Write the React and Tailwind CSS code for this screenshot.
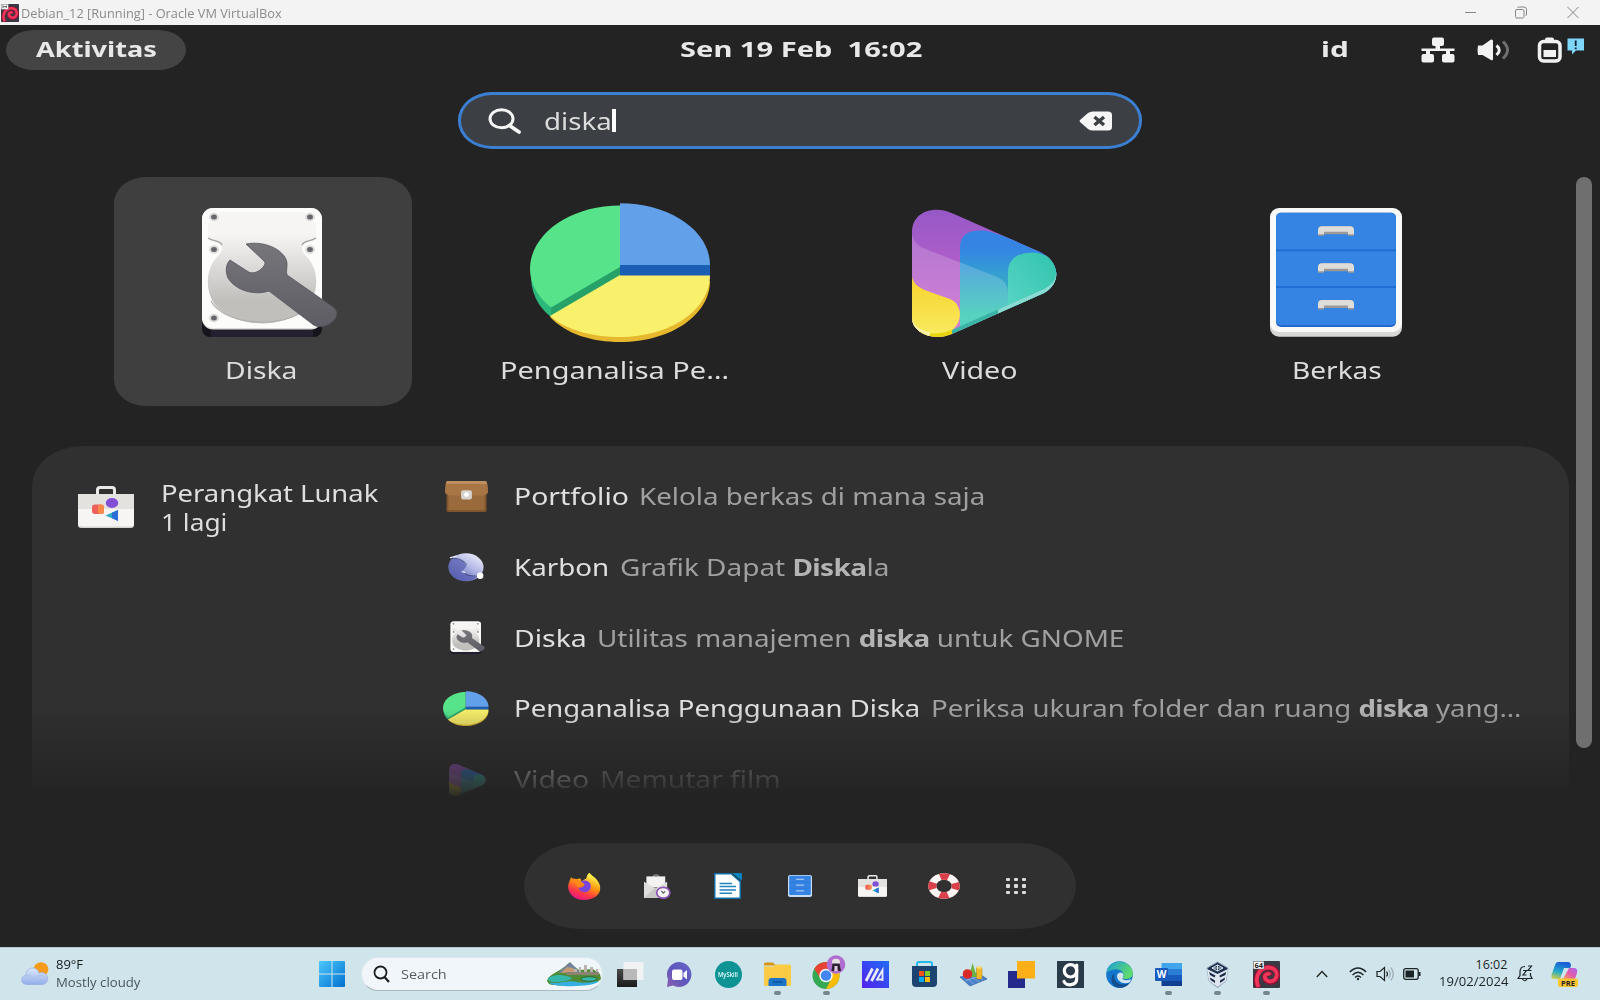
import React, { useLayoutEffect, useRef, useState } from "react";

/* Text stretched horizontally to a given width, like the scaled guest display. */
function Fit({ w, className = "", children }) {
  const ref = useRef(null);
  const [scale, setScale] = useState(1);
  useLayoutEffect(() => {
    setScale(w / ref.current.offsetWidth);
  }, [w]);
  return (
    <span className={"block shrink-0 " + className} style={{ width: w }}>
      <span ref={ref} className="inline-block origin-left whitespace-pre" style={{ transform: `scaleX(${scale})` }}>
        {children}
      </span>
    </span>
  );
}

const VIEW = { viewBox: "0 0 182 140", preserveAspectRatio: "none" };

function DiskIcon({ className }) {
  return (
    <svg {...VIEW} className={className}>
      <defs>
        <linearGradient id="dPlate" x1="0" y1="0" x2="0" y2="1">
          <stop offset="0.2" stopColor="#f6f5f4" />
          <stop offset="0.8" stopColor="#c0bfbc" />
        </linearGradient>
        <linearGradient id="dWrench" x1="0" y1="0" x2="0" y2="1">
          <stop offset="0" stopColor="#77767b" />
          <stop offset="1" stopColor="#5e5c64" />
        </linearGradient>
      </defs>
      <rect x="30" y="20" width="120" height="115" rx="8" fill="#17151c" />
      <rect x="39" y="120" width="102" height="15" fill="#241f31" />
      <rect x="30" y="6" width="120" height="121.500" rx="11" fill="#deddda" />
      <rect x="30" y="6" width="120" height="120" rx="11" fill="#fcfcfb" />
      <path d="M48 10H132C134 18 138 20 144 21V37C138 39 131 40 130 46C130 52 137 55 141 64C147 77 145 97 132 108C109 126 71 126 48 108C35 97 33 77 39 64C43 55 50 52 50 46C49 40 42 39 36 37V21C42 20 46 18 48 10Z" fill="url(#dPlate)" />
      <path d="M36 36C42 40 48 38 50 43M144 36C138 40 132 38 130 43" fill="none" stroke="#a5a39f" strokeWidth="1.500" />
      <path d="M39 99C54 127 126 127 141 99" fill="none" stroke="#b0aeaa" strokeWidth="1.200" />
      {[[42, 15], [138, 15], [42, 47.500], [138, 47.500], [42, 116]].map(([x, y]) => (
        <g key={`${x}-${y}`}>
          <ellipse cx={x} cy={y} rx="5" ry="4.300" fill="#dcdbd8" />
          <ellipse cx={x} cy={y} rx="2.900" ry="2.500" fill="#66656a" />
        </g>
      ))}
      <path d="M74 42C95 38 115 50 115 62C115 67 114 70 115 73L161 105C166 109 166 114 161 119C155 125 145 127 139 121L97 89C82 94 63 88 56 76C53 69 54 62 58 58L75 69C79 72 84 71 88 68C93 64 94 61 92 59Z" fill="url(#dWrench)" stroke="#55535b" strokeWidth="0.800" />
    </svg>
  );
}

function PieIcon({ className }) {
  return (
    <svg {...VIEW} className={className}>
      <path d="M90 70L1 70C0 90 8 105 21 115L90 74Z" fill="#2db87b" />
      <path d="M21 105.500L90 64V74L21 113Z" fill="#26a269" />
      <path d="M90 79H180C180 112 142 140 90 140C62 140 36 132 20 115Z" fill="#e5b82e" />
      <path d="M90 73H180C180 108 140 135 90 135C62 135 36 128 20 114Z" fill="#f9f06b" />
      <path d="M90 3.500V65L21 105.500C8 95 0 82 0 67C0 32 40 3.500 90 3.500Z" fill="#57e389" />
      <path d="M90 62H180V73.500H90Z" fill="#1a5fb4" />
      <path d="M90 1.300C140 1.300 180 29 180 63H90Z" fill="#62a0ea" />
    </svg>
  );
}

function VideoIcon({ className }) {
  return (
    <svg {...VIEW} className={className}>
      <defs>
        <clipPath id="vClip">
          <path d="M24 30C24 10 46 2 66 12L152 50C173 60 173 82 156 91L64 132C44 140 24 130 24 116Z" />
        </clipPath>
        <linearGradient id="vPurple" x1="0" y1="0" x2="0" y2="1">
          <stop offset="0" stopColor="#9258c6" />
          <stop offset="0.7" stopColor="#c061cb" />
        </linearGradient>
        <linearGradient id="vBlue" x1="0" y1="0" x2="0" y2="1">
          <stop offset="0.15" stopColor="#3584e4" />
          <stop offset="0.75" stopColor="#33c7b2" />
        </linearGradient>
        <linearGradient id="vTeal" x1="0" y1="1" x2="1" y2="0">
          <stop offset="0" stopColor="#5bd6c6" />
          <stop offset="1" stopColor="#2fc3ac" />
        </linearGradient>
        <linearGradient id="vYellow" x1="0" y1="0" x2="0" y2="1">
          <stop offset="0" stopColor="#f6d32d" />
          <stop offset="1" stopColor="#f9ec63" />
        </linearGradient>
      </defs>
      <g clipPath="url(#vClip)">
        <rect x="20" width="150" height="140" fill="url(#vPurple)" />
        <path d="M72 140V45C72 30 86 26 103 30L180 55V110Z" fill="url(#vBlue)" />
        <path d="M24 32C26 42 32 45 40 48L107 74C116 78 120 82 120 92V140H20Z" fill="#ffffff" opacity="0.180" />
        <path d="M120 118V70C120 55 133 49 150 51L175 60V90Z" fill="url(#vTeal)" />
        <path d="M24 75C26 84 34 87 42 90L62 97C74 102 74 117 68 124C62 132 54 138 46 138H20Z" fill="url(#vYellow)" />
        <path d="M24 116C24 130 44 136 64 128V140H20Z" fill="#e8d60c" />
        <path d="M24 116C26 125 34 129 42 130V137H20Z" fill="#f8f2a8" />
        <path d="M64 128L156 87C165 82 168 77 168 70H175V92L64 142Z" fill="#3bb3a6" />
        <path d="M110 107.500L156 87C165 82 168 77 168 70H175V92L110 116Z" fill="#8adbd2" />
      </g>
    </svg>
  );
}

function FilesIcon({ className }) {
  return (
    <svg {...VIEW} className={className}>
      <rect x="24" y="12" width="132" height="122.700" rx="9" fill="#d8d7d4" />
      <rect x="24" y="6" width="132" height="124" rx="9" fill="#f9f9f8" />
      <rect x="30" y="10.700" width="120" height="114.300" rx="5" fill="#1c66cc" />
      <rect x="30" y="10.700" width="120" height="112.500" rx="5" fill="#3584e4" />
      {[48.300, 85].map((y) => (
        <rect key={y} x="30" y={y - 1} width="120" height="2" fill="#1f6ed6" />
      ))}
      {[24.300, 61.200, 98].map((y) => (
        <g key={y} transform={`translate(72 ${y})`}>
          <path d="M0 9.500V4Q0 0 4 0H32Q36 0 36 4V9.500H30V8H6V9.500Z" fill="#9a9996" />
          <path d="M0 8V4Q0 0 4 0H32Q36 0 36 4V8H30V5.500H6V8Z" fill="#deddda" />
        </g>
      ))}
    </svg>
  );
}

function FilesSmallIcon({ className }) {
  return (
    <svg viewBox="0 0 24 25" preserveAspectRatio="none" className={className}>
      <rect width="24" height="25" rx="2" fill="#c9dcf3" />
      <rect x="1.200" y="0.800" width="21.600" height="22" rx="1.200" fill="#3584e4" />
      <path d="M8 5H16M8 11.500H16M8 18H16" stroke="#9fc3ee" strokeWidth="1.600" />
      <path d="M1 8H23M1 15H23" stroke="#2a74d2" strokeWidth="0.600" />
    </svg>
  );
}

function SoftwareIcon({ className }) {
  return (
    <svg viewBox="0 0 56 42" preserveAspectRatio="none" className={className}>
      <path d="M19.500 9V4Q19.500 1.500 22 1.500H34Q36.500 1.500 36.500 4V9" fill="none" stroke="#e9e9e7" strokeWidth="3" />
      <path d="M0 8H56V39Q56 42 53 42H3Q0 42 0 39Z" fill="#d3d2cf" />
      <path d="M0 8H56V38Q56 40.500 53 40.500H3Q0 40.500 0 38Z" fill="#f6f5f4" />
      <path d="M0 8H56V23H0Z" fill="#e3e2df" />
      <rect x="14" y="18.500" width="12" height="9.500" rx="3" fill="#f0605a" />
      <rect x="20" y="18.500" width="6" height="9.500" rx="2.500" fill="#f98a4c" />
      <ellipse cx="34" cy="17" rx="6.200" ry="5" fill="#8150d6" />
      <path d="M27.500 29.500L40 24V35Z" fill="#2aaac4" />
      <path d="M34 26.700L40 24V35L34 32Z" fill="#2b6fd6" />
    </svg>
  );
}

function PortfolioIcon({ className }) {
  return (
    <svg viewBox="0 0 44 32" preserveAspectRatio="none" className={className}>
      <rect x="1.500" y="2" width="41" height="30" rx="2" fill="#80552d" />
      <rect x="3.500" y="13" width="37" height="17" fill="#986a3c" />
      <path d="M2 0H42Q44 2 44 12Q42 15 36 15H8Q2 15 0 12Q0 2 2 0Z" fill="#a87545" />
      <path d="M2 0H42L43 3H1Z" fill="#bd8f62" />
      <rect x="16.500" y="9.500" width="11" height="9.500" rx="2" fill="#d6d3ce" />
      <circle cx="22" cy="14" r="2.500" fill="#ffffff" />
    </svg>
  );
}

function KarbonIcon({ className }) {
  return (
    <svg viewBox="0 0 38 30" preserveAspectRatio="none" className={className}>
      <defs>
        <linearGradient id="kb" x1="0.200" y1="1" x2="0.900" y2="0">
          <stop offset="0.100" stopColor="#6369bb" />
          <stop offset="0.550" stopColor="#b4b9e6" />
          <stop offset="0.900" stopColor="#e3e6f7" />
        </linearGradient>
      </defs>
      <ellipse cx="18.500" cy="14.800" rx="18" ry="14.500" fill="url(#kb)" />
      <path d="M3 6.500C10 5 17 8 19 13C19 16 14 17 16 20C19 23 24 24 29 25C24 30 12 30 6 24.500C0 19-1 12 3 6.500Z" fill="#5a60b0" opacity="0.750" />
      <path d="M3 6C10 4.500 17 8 19 12M17 21C21 24 28 24 32 24" fill="none" stroke="#3a3f78" strokeWidth="0.900" />
      <path d="M2 5L9 3M14 19L18 20.500" stroke="#e7eaf8" strokeWidth="1.200" />
      <circle cx="33" cy="23.500" r="3.300" fill="#fff" />
    </svg>
  );
}

function FirefoxIcon({ className }) {
  return (
    <svg viewBox="0 0 32 26" preserveAspectRatio="none" className={className}>
      <defs>
        <linearGradient id="ff" x1="0.800" y1="0" x2="0.300" y2="1">
          <stop offset="0.100" stopColor="#fff44f" />
          <stop offset="0.450" stopColor="#ff980e" />
          <stop offset="0.750" stopColor="#ff3647" />
          <stop offset="1" stopColor="#e31587" />
        </linearGradient>
      </defs>
      <path d="M3 4L6 7C8 5 10 6 12 5L13 8L18 5C18 2 20 0 21 0C23 3 27 4 29 8C34 15 31 25 16 26C3 26-2 16 1 9Z" fill="url(#ff)" />
      <path d="M12 8C17 6 23 8 22 14C21 20 11 20 10 14C13 15 15 13 16 11Z" fill="#7a45dd" />
      <path d="M3 6C7 4 11 7 16 11C14 13 12 12 10 14C8 12 8 9 3 6Z" fill="#ff8a16" />
    </svg>
  );
}

function MailIcon({ className }) {
  return (
    <svg viewBox="0 0 28 26" preserveAspectRatio="none" className={className}>
      <path d="M9 3Q12.500-1 16 3" fill="none" stroke="#77767b" strokeWidth="2" />
      <path d="M2.500 2.500H22V14H2.500Z" fill="#f4f3f2" />
      <path d="M0 8L12 15L24 8V25H0Z" fill="#dedddb" />
      <path d="M0 25L12 14L24 25Z" fill="#c8c7c4" />
      <ellipse cx="20" cy="19.500" rx="6.800" ry="5.700" fill="#f6f5f4" stroke="#8f55b5" strokeWidth="1.800" />
      <path d="M18 17.500L20 20L22 18" fill="none" stroke="#5e5c64" strokeWidth="1.200" />
    </svg>
  );
}

function WriterIcon({ className }) {
  return (
    <svg viewBox="0 0 28 26" preserveAspectRatio="none" className={className}>
      <path d="M0 0H28V7H27V26H0Z" fill="#106fa8" />
      <path d="M1.500 1.500H17L25.500 9V24.500H1.500Z" fill="#fff" />
      <path d="M18 0.500H27.500V8Z" fill="#0b87bf" />
      <path d="M18 0.500L27.500 8" stroke="#303030" strokeWidth="1" />
      <path d="M5.500 10.500H18M5.500 13.500H22M5.500 17H22M5.500 20.200H18" stroke="#2383bd" strokeWidth="1.600" />
    </svg>
  );
}

function HelpRing({ className }) {
  return (
    <svg viewBox="0 0 32 26" preserveAspectRatio="none" className={className}>
      <g transform="translate(16 13) scale(1 0.810)">
        <circle r="11.700" fill="none" stroke="#fbf6f4" strokeWidth="8" />
        <circle r="11.700" fill="none" stroke="#d9404a" strokeWidth="8" strokeDasharray="8.400 9.978" strokeDashoffset="4.200" />
      </g>
    </svg>
  );
}

function DebianSwirl({ className, badge }) {
  return (
    <svg viewBox="0 0 27 27" className={className}>
      <rect width="27" height="27" rx="1" fill="#3a3a44" />
      <path d="M6 27C0 18 5 6.500 15.500 6.500C24 6.500 26.500 14 22.500 19C18.500 23 11 20.500 12 15C13 12 17 12.500 17.500 14.500" fill="none" stroke="#8f1034" strokeWidth="5.500" />
      <path d="M5.500 26C1 17 6 6.500 15.500 6.500C23.500 6.500 25.500 14 21.800 18.500C18 22.500 11 19.500 12 14.800C13 12.300 16 12.500 17 14" fill="none" stroke="#f0355a" strokeWidth="3.800" />
      <path d="M0.300 0.300H11V8H0.300Z" fill="#fff" stroke="#555" strokeWidth="0.500" />
      {badge ? (
        <text x="5.700" y="6.900" textAnchor="middle" fontSize="7.500" fontWeight="700" fontFamily="Open Sans, sans-serif" fill="#222">64</text>
      ) : (
        <path d="M3 2V6M8 2V6M3 4H8" stroke="#444" strokeWidth="1.200" />
      )}
    </svg>
  );
}

function Tile({ icon, label, w, active, dx }) {
  return (
    <div className={`flex h-[229px] w-[298px] shrink-0 flex-col items-center rounded-[32px/26px] pt-[25px] ${active ? "bg-[#3f3f3f]" : ""}`}>
      {icon}
      <Fit w={w} className={`mt-[13px] text-[24px] leading-[30px] text-[#dcdcdc] ${dx || ""}`}>{label}</Fit>
    </div>
  );
}

const big = "h-[140px] w-[182px] shrink-0";

function Row({ icon, name, nw, desc, dw }) {
  return (
    <div className="flex h-[70.700px] shrink-0 items-center">
      <div className="flex w-[49px] justify-center">{icon}</div>
      <Fit w={nw} className="ml-[23px] text-[23.500px] leading-[30px] text-[#e0e0e0]">{name}</Fit>
      <Fit w={dw} className="ml-[11px] text-[23.500px] leading-[30px] text-[#a0a0a0]">{desc}</Fit>
    </div>
  );
}

const Bold = ({ children }) => <b className="tracking-[-0.500px] text-[#b4b4b4]">{children}</b>;

function TopBar() {
  return (
    <div className="flex h-[49px] items-center pl-[6px] text-[22px] font-bold leading-[30px] text-[#e8e8e8]">
      <div className="flex h-[40px] w-[180px] items-center justify-center rounded-[28px/20px] bg-[#444]">
        <Fit w={121} className="mb-[3px]">Aktivitas</Fit>
      </div>
      <Fit w={242} className="mb-[3px] ml-[493.500px]">Sen 19 Feb  16:02</Fit>
      <Fit w={27} className="mb-[3px] ml-[399px]">id</Fit>
      <svg viewBox="0 0 34 26" className="ml-[73.500px] h-[26px] w-[34px]" fill="#f2f2f2">
        <rect x="11" y="0.500" width="12" height="8.500" rx="2" />
        <rect x="0.500" y="17" width="12.500" height="8.500" rx="2" />
        <rect x="21" y="17" width="12.500" height="8.500" rx="2" />
        <path d="M14.500 8H19V11.500H33.500V14H29V18H25V14H9V18H5V14H0.500V11.500H14.500Z" />
      </svg>
      <svg viewBox="0 0 34 24" className="ml-[22px] h-[24px] w-[34px]">
        <path d="M1 7.500H5.500L14 1.500Q16 1 16 3V21Q16 23 14 22L5.500 17H1Q0 12 1 7.500Z" fill="#f2f2f2" />
        <path d="M19.500 7.500Q25 12 19.500 17" fill="none" stroke="#f2f2f2" strokeWidth="3" />
        <path d="M26 3.500Q35 12 26 20.500" fill="none" stroke="#707070" strokeWidth="3" />
      </svg>
      <svg viewBox="0 0 26 26" className="ml-[26px] h-[26px] w-[26px]">
        <rect x="8" y="0.500" width="9" height="5" rx="2" fill="#f2f2f2" />
        <rect x="2.500" y="4.500" width="20.500" height="19.500" rx="4" fill="none" stroke="#f2f2f2" strokeWidth="3.500" />
        <rect x="6.500" y="13" width="12.500" height="7" fill="#f2f2f2" />
      </svg>
      <svg viewBox="0 0 18 17" className="mb-[6px] ml-[4px] h-[17px] w-[18px]">
        <path d="M0.500 0.500H17V12.500H9L5 16.500V12.500H0.500Z" fill="#7fd6fb" />
        <path d="M8.700 2.500V8M8.700 9.500V11.300" stroke="#123" strokeWidth="1.800" />
      </svg>
    </div>
  );
}

function TaskSlot({ children, run }) {
  return (
    <div className="relative flex h-[52px] w-[48.950px] shrink-0 items-center justify-center">
      {children}
      {run && <span className="absolute bottom-[5px] h-[4px] w-[7px] rounded-full bg-[#75868d]" />}
    </div>
  );
}

function Taskbar() {
  const s = "h-[27px] w-[27px]";
  return (
    <div className="flex h-[53px] items-center border-t border-[#b4c5cb] bg-[#cfe4eb] text-[12px] leading-[17.500px] text-[#1d2426]">
      <svg viewBox="0 0 28 24" className="ml-[21px] h-[24px] w-[28px]">
        <defs>
          <linearGradient id="wc" x1="0" y1="0" x2="0" y2="1">
            <stop offset="0" stopColor="#dce8fb" /><stop offset="1" stopColor="#93aeea" />
          </linearGradient>
        </defs>
        <circle cx="20" cy="7.500" r="7.300" fill="#f59a1c" />
        <path d="M6 22.500C-1 22.500-1 14 5 13C5 4 17 4 18 11C28 8 30 22 21 22.500Z" fill="url(#wc)" stroke="#8ea6dd" strokeWidth="0.600" />
        <path d="M4 15C8 11 12 15 13 18C16 13 20 13 22 14" fill="none" stroke="#a9bfee" />
      </svg>
      <div className="mb-[1px] ml-[6.500px] w-[263.500px]">
        <Fit w={27} className="text-[#15191a]">89°F</Fit>
        <Fit w={84.500} className="text-[#4b5659]">Mostly cloudy</Fit>
      </div>
      <svg viewBox="0 0 26 26" className="h-[26px] w-[26px]">
        <defs>
          <linearGradient id="wn" x1="0" y1="0" x2="1" y2="1">
            <stop offset="0" stopColor="#4cc8fb" /><stop offset="1" stopColor="#0070d0" />
          </linearGradient>
        </defs>
        <path d="M0 1Q0 0 1 0H12.500V12.500H0ZM13.500 0H25Q26 0 26 1V12.500H13.500ZM0 13.500H12.500V26H1Q0 26 0 25ZM13.500 13.500H26V25Q26 26 25 26H13.500Z" fill="url(#wn)" />
      </svg>
      <div className="ml-[15.500px] flex h-[34px] w-[242px] items-center overflow-hidden rounded-full border border-[#dbe7ec] border-b-[#a9b9c0] bg-[#f0f6f9]">
        <svg viewBox="0 0 17 18" className="ml-[11px] h-[18px] w-[17px]" fill="none" stroke="#1c1f20" strokeWidth="1.800">
          <circle cx="7.500" cy="7.500" r="6" /><path d="M11.500 12L16 17" strokeWidth="2.200" />
        </svg>
        <Fit w={46} className="ml-[11px] mt-[1px] text-[13.500px] text-[#565d60]">Search</Fit>
        <svg viewBox="0 0 54 26" className="ml-auto mr-[1px] h-[26px] w-[54px]">
          <path d="M0 20C2 12 12 12 22 2L32 9L46 8L53 13L54 18C50 25 8 26 2 23Z" fill="#4f8a35" />
          <path d="M11 12L23 1L33 11Z" fill="#72839b" />
          <path d="M14 12L20 6L26 7L30 12Z" fill="#c69a72" />
          <path d="M27 8H30V14H27ZM32 6H34V14H32ZM37 4H40V14H37ZM43 6H46V14H43ZM49 8H51V14H49Z" fill="#b9b4b2" />
          <path d="M18 11H52V14H20Z" fill="#8d8374" />
          <path d="M1 17C8 12 20 14 25 17C22 21 6 22 2 20Z" fill="#35b7ac" />
          <path d="M2 22C20 22 22 19 30 21C40 23 49 20 52 20C48 26 10 27 2 22Z" fill="#35aee0" />
          <ellipse cx="42" cy="18" rx="8" ry="2.300" fill="#35b7ac" stroke="#2f6b2a" />
        </svg>
      </div>
      <div className="ml-[3.500px] flex">
        <TaskSlot>
          <svg viewBox="0 0 27 27" className={s}>
            <defs><linearGradient id="tv" x1="0" y1="0" x2="0" y2="1"><stop offset="0" stopColor="#4a4a4a" /><stop offset="1" stopColor="#1b1b1b" /></linearGradient></defs>
            <rect x="0" y="8" width="20" height="18" fill="url(#tv)" />
            <rect x="6.500" y="1" width="20" height="18" fill="#f4f4f4" opacity="0.900" />
            <rect x="6.500" y="8" width="13.500" height="11" fill="#b9b9b9" />
          </svg>
        </TaskSlot>
        <TaskSlot>
          <svg viewBox="0 0 27 27" className={s}>
            <defs><linearGradient id="ch" x1="1" y1="0" x2="0" y2="1"><stop offset="0" stopColor="#6e69c8" /><stop offset="0.500" stopColor="#5b57bd" /><stop offset="1" stopColor="#8a5fae" /></linearGradient></defs>
            <path d="M13.500 1A12.500 12.500 0 1 1 7 24.500L1 26L2 18.500A12.500 12.500 0 0 1 13.500 1Z" fill="url(#ch)" />
            <rect x="6" y="8.500" width="10.500" height="10.500" rx="2" fill="#fff" />
            <path d="M17.500 12L21 9V18.500L17.500 15.500Z" fill="#fff" />
          </svg>
        </TaskSlot>
        <TaskSlot>
          <span className="flex h-[27px] w-[27px] items-center justify-center rounded-full bg-[#0d9394] text-[#e8ffff]">
            <Fit w={20} className="text-[7px] font-semibold leading-none">MySkill</Fit>
          </span>
        </TaskSlot>
        <TaskSlot run>
          <svg viewBox="0 0 27 25" className="h-[25px] w-[27px]">
            <path d="M0 2Q0 0.500 1.500 0.500H9L12 3.500H0Z" fill="#d9960f" />
            <path d="M0 4.500H9L12 2.500H25.500Q27 2.500 27 4V22.500Q27 24 25.500 24H1.500Q0 24 0 22.500Z" fill="#fbcb45" />
            <path d="M4.500 24V19Q4.500 16 7.500 16H19.500Q22.500 16 22.500 19V24Z" fill="#1b74c8" />
            <path d="M9 20H18.500" stroke="#0b4a8f" strokeWidth="1.200" />
          </svg>
        </TaskSlot>
        <TaskSlot run>
          <svg viewBox="0 0 34 34" className="mb-[5px] ml-[6px] h-[34px] w-[34px] shrink-0">
            <g transform="translate(14 20.500)">
              <circle r="13.500" fill="#34a853" />
              <path d="M-11.700-6.750A13.500 13.500 0 0 1 11.700-6.750L0-6L-5.500 3Z" fill="#ea4335" />
              <path d="M11.700-6.750A13.500 13.500 0 0 1 0 13.500L5.500 3L3-6.500Z" fill="#fbbc05" />
              <circle r="6.700" fill="#fff" /><circle r="5.300" fill="#4285f4" />
            </g>
            <circle cx="24" cy="9.500" r="9.300" fill="#b06fd0" />
            <ellipse cx="24" cy="7" rx="4" ry="3.300" fill="#e7e2e4" />
            <path d="M20.500 8.500H27.500L29 16H26L24 11.500L22 16H19.500Z" fill="#2a2030" />
            <path d="M22.500 11H25.500V16H22.500Z" fill="#e0cfe0" />
          </svg>
        </TaskSlot>
        <TaskSlot>
          <svg viewBox="0 0 27 27" className={s}>
            <defs><linearGradient id="my" x1="1" y1="0" x2="0" y2="1"><stop offset="0" stopColor="#1f6cf5" /><stop offset="1" stopColor="#5420ee" /></linearGradient></defs>
            <rect width="27" height="27" fill="url(#my)" />
            <path d="M4 20L10.500 7.500M9.500 20L16 7.500" fill="none" stroke="#e8eaff" strokeWidth="2.800" />
            <path d="M14.500 19.500L20.500 9V20M15.500 18.500H20" fill="none" stroke="#e8eaff" strokeWidth="1.900" />
          </svg>
        </TaskSlot>
        <TaskSlot>
          <svg viewBox="0 0 27 27" className={s}>
            <path d="M1 5H26V22Q26 26 22 26H5Q1 26 1 22Z" fill="#1d4470" />
            <path d="M6 5V3Q6 1 8 1H19Q21 1 21 3V5" fill="none" stroke="#27b8ea" strokeWidth="2" />
            <rect x="8" y="10" width="5" height="5" fill="#f1511b" /><rect x="14" y="10" width="5" height="5" fill="#80cc28" />
            <rect x="8" y="16" width="5" height="5" fill="#00adef" /><rect x="14" y="16" width="5" height="5" fill="#fbbc09" />
          </svg>
        </TaskSlot>
        <TaskSlot>
          <svg viewBox="0 0 27 27" className={s}>
            <path d="M0 16L18 12L27 18L10 25Z" fill="#4a7fc9" stroke="#2c599c" strokeWidth="0.600" />
            <path d="M4 15L14 23M9 14L19 21M14 13L23 19M5 20L22 14" stroke="#9cc1ee" strokeWidth="0.600" />
            <path d="M12.500 2L17 16H9Z" fill="#6ab344" />
            <circle cx="7.500" cy="13" r="4.800" fill="#d92b27" />
            <rect x="16.500" y="6" width="5.500" height="12" rx="1.200" fill="#f1bb27" stroke="#ab7e15" strokeWidth="0.500" />
            <ellipse cx="19.200" cy="6.500" rx="2.700" ry="1.300" fill="#ffe27a" />
          </svg>
        </TaskSlot>
        <TaskSlot>
          <svg viewBox="0 0 27 27" className={s}>
            <rect x="0" y="10" width="17" height="17" fill="#232a8c" />
            <rect x="9" y="0" width="18" height="17.500" fill="#fdaf17" />
          </svg>
        </TaskSlot>
        <TaskSlot>
          <svg viewBox="0 0 27 27" className={s}>
            <rect width="27" height="27" fill="#293a49" />
            <circle cx="13.500" cy="9.800" r="6.200" fill="none" stroke="#fff" strokeWidth="3.200" />
            <path d="M19.700 4V17.500C19.700 25 9 25.500 7 20.500" fill="none" stroke="#fff" strokeWidth="3.200" strokeLinecap="round" />
          </svg>
        </TaskSlot>
        <TaskSlot>
          <svg viewBox="0 0 27 27" className={s}>
            <defs>
              <linearGradient id="eg" x1="0" y1="0" x2="1" y2="0.500"><stop offset="0" stopColor="#1a9fd8" /><stop offset="1" stopColor="#5edb6b" /></linearGradient>
            </defs>
            <circle cx="13.500" cy="13.500" r="13.300" fill="#1477cf" />
            <path d="M0.500 12C2-3 25-3 26.800 12C27 18 20 19 16.500 17.500C20 13 15 7 8 8.500C4 9 1.500 11 0.500 12Z" fill="url(#eg)" />
            <path d="M8.500 12C6 20 14 27 24 21.500C18 29 9 28 6 22C4.500 18 6 14 8.500 12Z" fill="#134f8f" />
            <path d="M11 15C11 11 17 10 17.500 14C17.500 16 16 17 16.500 18C19 20 24 19 25.500 18L23.500 21.500C17 24 11 20 11 15Z" fill="#cfe4eb" />
          </svg>
        </TaskSlot>
        <TaskSlot run>
          <svg viewBox="0 0 27 27" className={s}>
            <rect x="6.500" y="2" width="20.500" height="6" fill="#41a5ee" />
            <rect x="6.500" y="8" width="20.500" height="6" fill="#2b7cd3" />
            <rect x="6.500" y="14" width="20.500" height="6" fill="#185abd" />
            <rect x="6.500" y="20" width="20.500" height="5" fill="#103f91" />
            <rect x="0" y="7" width="13" height="13" rx="1" fill="#185abd" />
            <text x="6.500" y="17.200" textAnchor="middle" fontSize="10" fontWeight="700" fontFamily="Open Sans, sans-serif" fill="#fff">W</text>
          </svg>
        </TaskSlot>
        <TaskSlot run>
          <svg viewBox="0 0 27 27" className={s}>
            <path d="M13.500 1L24 7L22 20L13.500 26.500L5 20L3 7Z" fill="#1f3350" stroke="#93a5bd" strokeWidth="1" />
            <path d="M3 8L13.500 13L24 8L22 20L13.500 26L5 20Z" fill="#dde5ef" />
            <path d="M5 11L11.500 14.500L10.500 16.500L6 14ZM6 16.500L11 19.500V22L6.500 19ZM22 11L15.500 14.500L16 16.500L21.500 14ZM21 16.500L16 19.500V22L20.500 19Z" fill="#1b2b49" />
            <path d="M8 7L13.500 4L19 7L13.500 10ZM13.500 4V10M8 7H19" fill="none" stroke="#e7eef6" strokeWidth="0.900" />
          </svg>
        </TaskSlot>
        <TaskSlot run>
          <DebianSwirl className={s} badge />
        </TaskSlot>
      </div>
      <svg viewBox="0 0 12 8" className="ml-[25px] h-[8px] w-[12px]" fill="none" stroke="#222" strokeWidth="1.300"><path d="M0.800 7L6 1.500L11.200 7" /></svg>
      <svg viewBox="0 0 18 14" className="ml-[20.500px] h-[14px] w-[18px]" fill="none" stroke="#1d2426" strokeWidth="1.300">
        <path d="M0.800 5Q9-3 17.200 5M3.500 8Q9 2.500 14.500 8M6 10.500Q9 7.500 12 10.500" /><circle cx="9" cy="12" r="1.200" fill="#1d2426" stroke="none" />
      </svg>
      <svg viewBox="0 0 18 16" className="ml-[9px] h-[16px] w-[18px]" fill="none" stroke="#1d2426" strokeWidth="1.200">
        <path d="M1 5.500H4L8.500 1.500V14.500L4 10.500H1Z" /><path d="M10.500 5.500Q12.500 8 10.500 10.500" />
        <path d="M12.500 3.500Q16 8 12.500 12.500M15 1.500Q19.500 8 15 14.500" stroke="#9aa9ae" />
      </svg>
      <svg viewBox="0 0 18 12" className="ml-[9px] h-[12px] w-[18px]">
        <rect x="0.700" y="0.700" width="14.500" height="10.600" rx="2" fill="none" stroke="#1d2426" strokeWidth="1.300" />
        <rect x="2.500" y="2.500" width="8.500" height="7" fill="#1d2426" /><rect x="15.500" y="4" width="2" height="4" fill="#1d2426" />
      </svg>
      <div className="mb-[2px] ml-auto mr-[9.500px] flex flex-col items-end text-[12.500px]">
        <Fit w={32}>16:02</Fit>
        <Fit w={69}>19/02/2024</Fit>
      </div>
      <svg viewBox="0 0 16 17" className="mb-[1px] h-[17px] w-[16px]" fill="none" stroke="#1d2426" strokeWidth="1.200">
        <path d="M8 1.500C4 1.500 3 4.500 3 7V10.500L1 13.500H15L13.500 10.500V8M5.500 14Q8 17.500 10 14" />
        <path d="M6 5.500H9.500L6 10H9.500M11 1H14.500L11 5.500H14.500" />
      </svg>
      <svg viewBox="0 0 28 27" className="ml-[18px] mr-[21px] h-[27px] w-[28px]">
        <defs>
          <linearGradient id="c1" x1="0.300" y1="0" x2="0" y2="1"><stop offset="0" stopColor="#1a62d6" /><stop offset="0.500" stopColor="#21a9c9" /><stop offset="1" stopColor="#e4d23c" /></linearGradient>
          <linearGradient id="c2" x1="1" y1="0" x2="0" y2="1"><stop offset="0" stopColor="#a765ef" /><stop offset="0.500" stopColor="#e05db0" /><stop offset="1" stopColor="#fb9a54" /></linearGradient>
        </defs>
        <path d="M7 1H17Q20 1 20 5L19 7H13L9 18H3Q0 18 0.500 14L4 4Q5 1 7 1Z" fill="url(#c1)" />
        <path d="M18 7H23Q27 7 26 12L24 18H12Z" fill="url(#c2)" />
        <rect x="7" y="17.500" width="20" height="8.500" rx="2" fill="#fdc62f" />
        <text x="17" y="24.700" textAnchor="middle" fontSize="7.500" fontWeight="700" fontFamily="Open Sans, sans-serif" fill="#222">PRE</text>
      </svg>
    </div>
  );
}

export default function App() {
  return (
    <div className="flex h-[1000px] w-[1600px] flex-col overflow-hidden bg-[#232323] font-['Open_Sans','Noto_Sans',sans-serif]">
      <div className="flex h-[25px] items-center bg-[#f3f3f3]">
        <DebianSwirl className="ml-[1px] h-[18px] w-[18px]" />
        <Fit w={261} className="ml-[2px] mt-[1px] text-[12.500px] leading-[17px] text-[#8b8b8b]">Debian_12 [Running] - Oracle VM VirtualBox</Fit>
        <svg viewBox="0 0 114 13" className="mb-[1px] ml-auto mr-[21px] h-[13px] w-[114px]" fill="none" stroke="#858585" strokeWidth="1">
          <path d="M0 6.500H11M102.500 1L113.500 12M113.500 1L102.500 12" />
          <rect x="50.500" y="3.500" width="8.500" height="8.500" rx="1.500" />
          <path d="M52.500 1.500Q52.500 1 54.500 1H59Q61.500 1 61.500 3.500V8Q61.500 9.500 60.500 10" />
        </svg>
      </div>

      <div className="flex h-[922px] flex-col items-center font-['Noto_Sans','Open_Sans',sans-serif]">
        <div className="w-full"><TopBar /></div>

        <div className="mt-[18px] flex h-[57px] w-[684px] shrink-0 items-center rounded-[34px/28px] border-[3px] border-[#3b7fd2] bg-[#3c3f44]">
          <svg viewBox="0 0 34 26" preserveAspectRatio="none" className="ml-[27px] h-[26px] w-[34px]" fill="none" stroke="#f6f6f6">
            <ellipse cx="13.500" cy="10.700" rx="11.500" ry="9" strokeWidth="3" /><path d="M21.500 17.500L31 24" strokeWidth="3.800" strokeLinecap="round" />
          </svg>
          <Fit w={68} className="ml-[22px] text-[24px] leading-[30px] text-[#dcdcdc]">diska</Fit>
          <span className="h-[23px] w-[3.500px] bg-white" />
          <svg viewBox="0 0 33 20" className="ml-auto mr-[27px] h-[20px] w-[33px]">
            <path d="M1 9Q0 10 1 11L9 18Q11 19.500 14 19.500H29Q33 19.500 33 16V4Q33 0.500 29 0.500H14Q11 0.500 9 2Z" fill="#f6f6f6" />
            <path d="M15.500 6L25 14M25 6L15.500 14" stroke="#3c3f44" strokeWidth="3.400" />
          </svg>
        </div>

        <div className="mt-[28px] flex w-full shrink-0 gap-[60px] pl-[114px]">
          <Tile active icon={<DiskIcon className={big} />} label="Diska" w={73} dx="mr-[3px]" />
          <Tile icon={<PieIcon className={big} />} label="Penganalisa Pe…" w={229} dx="mr-[13px]" />
          <Tile icon={<VideoIcon className={big} />} label="Video" w={75} />
          <Tile icon={<FilesIcon className={big} />} label="Berkas" w={90} />
          <div className="-mb-[342px] ml-[30px] h-[571px] w-[16px] shrink-0 rounded-[8px] bg-[#6f6f6f]" />
        </div>

        <div className="mt-[40px] flex h-[355px] w-[1537px] shrink-0 overflow-hidden rounded-t-[50px_40px] bg-[#303030] [mask-image:linear-gradient(#000_74%,transparent_100%)]">
          <div className="flex w-[410px] items-start pl-[46px] pt-[31px]">
            <SoftwareIcon className="mt-[9px] h-[42px] w-[56px]" />
            <div className="ml-[27.500px] text-[23.500px] leading-[29px] text-[#dedede]">
              <Fit w={217} className="mt-[2px]">Perangkat Lunak</Fit>
              <Fit w={66}>1 lagi</Fit>
            </div>
          </div>
          <div className="flex flex-col pt-[15px]">
            <Row icon={<PortfolioIcon className="h-[31px] w-[43px]" />} name="Portfolio" nw={114.500} desc="Kelola berkas di mana saja" dw={346} />
            <Row icon={<KarbonIcon className="h-[29px] w-[37px]" />} name="Karbon" nw={95.500} desc={<>Grafik Dapat <Bold>Diska</Bold>la</>} dw={269} />
            <Row icon={<DiskIcon className="h-[35px] w-[46px]" />} name="Diska" nw={72.500} desc={<>Utilitas manajemen <Bold>diska</Bold> untuk GNOME</>} dw={527} />
            <Row icon={<PieIcon className="h-[35px] w-[46px]" />} name="Penganalisa Penggunaan Diska" nw={406} desc={<>Periksa ukuran folder dan ruang <Bold>diska</Bold> yang…</>} dw={590} />
            <Row icon={<VideoIcon className="h-[35px] w-[46px]" />} name="Video" nw={75} desc="Memutar film" dw={181} />
          </div>
        </div>

        <div className="mt-[42px] flex h-[86px] w-[552px] shrink-0 items-center justify-center rounded-[56px/43px] bg-[#303030]">
          <div className="flex w-[72px] justify-center"><FirefoxIcon className="h-[27px] w-[33px]" /></div>
          <div className="flex w-[72px] justify-center pl-[2px]"><MailIcon className="h-[25px] w-[27px]" /></div>
          <div className="flex w-[72px] justify-center"><WriterIcon className="h-[26px] w-[28px]" /></div>
          <div className="flex w-[72px] justify-center"><FilesSmallIcon className="h-[22px] w-[24px]" /></div>
          <div className="flex w-[72px] justify-center"><SoftwareIcon className="h-[22px] w-[29px]" /></div>
          <div className="flex w-[72px] justify-center"><HelpRing className="h-[26px] w-[32px]" /></div>
          <div className="flex w-[72px] justify-center">
            <div className="grid grid-cols-3 gap-x-[4px] gap-y-[3px]">
              {Array.from({ length: 9 }, (_, i) => <span key={i} className="h-[3.500px] w-[4px] rounded-[1px] bg-[#dcdcdc]" />)}
            </div>
          </div>
        </div>
      </div>

      <Taskbar />
    </div>
  );
}
